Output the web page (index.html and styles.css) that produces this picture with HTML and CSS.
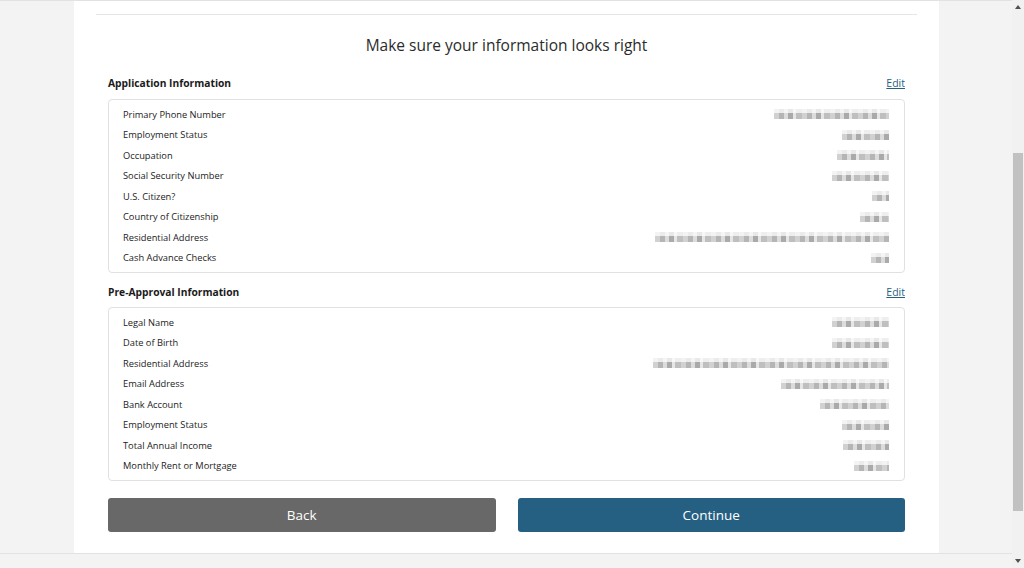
FILE: index.html
```html
<!DOCTYPE html>
<html>
<head>
<meta charset="utf-8">
<link rel="stylesheet" href="styles.css">
</head>
<body>
<div class="main">
  <div class="content">
    <div class="card">
      <div class="rule"></div>
      <div class="inner">
        <h1 class="title">Make sure your information looks right</h1>

        <div class="section-head">
          <span class="section-title">Application Information</span>
          <a class="edit" href="#">Edit</a>
        </div>
        <div class="box">
          <div class="row"><span class="label">Primary Phone Number</span><span class="val" style="width:115px"></span></div>
          <div class="row"><span class="label">Employment Status</span><span class="val" style="width:47px"></span></div>
          <div class="row"><span class="label">Occupation</span><span class="val" style="width:52px"></span></div>
          <div class="row"><span class="label">Social Security Number</span><span class="val" style="width:57px"></span></div>
          <div class="row"><span class="label">U.S. Citizen?</span><span class="val" style="width:17px"></span></div>
          <div class="row"><span class="label">Country of Citizenship</span><span class="val" style="width:29px"></span></div>
          <div class="row"><span class="label">Residential Address</span><span class="val" style="width:234px"></span></div>
          <div class="row"><span class="label">Cash Advance Checks</span><span class="val" style="width:18px"></span></div>
        </div>

        <div class="section-head second">
          <span class="section-title">Pre-Approval Information</span>
          <a class="edit" href="#">Edit</a>
        </div>
        <div class="box box2">
          <div class="row"><span class="label">Legal Name</span><span class="val" style="width:57px"></span></div>
          <div class="row"><span class="label">Date of Birth</span><span class="val" style="width:57px"></span></div>
          <div class="row"><span class="label">Residential Address</span><span class="val" style="width:236px"></span></div>
          <div class="row"><span class="label">Email Address</span><span class="val" style="width:108px"></span></div>
          <div class="row"><span class="label">Bank Account</span><span class="val" style="width:69px"></span></div>
          <div class="row"><span class="label">Employment Status</span><span class="val" style="width:47px"></span></div>
          <div class="row"><span class="label">Total Annual Income</span><span class="val" style="width:46px"></span></div>
          <div class="row"><span class="label">Monthly Rent or Mortgage</span><span class="val" style="width:35px"></span></div>
        </div>

        <div class="actions">
          <button class="btn back">Back</button>
          <button class="btn continue">Continue</button>
        </div>
      </div>
    </div>
  </div>
  <div class="bottom-strip"></div>
</div>
<div class="scrollbar">
  <div class="arrow up"></div>
  <div class="track"><div class="thumb"></div></div>
  <div class="arrow down"></div>
</div>
</body>
</html>
```
FILE: styles.css
```css
html, body {
  margin: 0;
  padding: 0;
}
body {
  width: 1024px;
  height: 568px;
  overflow: hidden;
  display: flex;
  background: #f3f3f3;
  font-family: "Open Sans", "Noto Sans", sans-serif;
  color: #222;
}
.main {
  flex: 1;
  display: flex;
  flex-direction: column;
  border-top: 1px solid #e2e2e2;
}
.content {
  flex: 1;
  display: flex;
  padding-left: 74px;
}
.card {
  width: 865px;
  background: #fff;
  padding: 0 22px;
  box-sizing: border-box;
}
.rule {
  height: 1px;
  background: #e6e6e6;
  margin-top: 13px;
}
.inner {
  padding: 0 12px;
}
.title {
  margin: 18px 0 0;
  font-size: 15.5px;
  font-weight: 400;
  line-height: 24px;
  text-align: center;
  color: #2b2b2b;
}
.section-head {
  display: flex;
  justify-content: space-between;
  align-items: center;
  margin-top: 19px;
  line-height: 15px;
}
.section-head.second {
  margin-top: 12px;
}
.section-title {
  font-size: 10.25px;
  font-weight: 700;
  color: #1a1a1a;
}
.edit {
  font-size: 10.5px;
  color: #255f82;
  text-decoration: underline;
}
.box {
  margin-top: 8px;
  border: 1px solid #e1e1e1;
  border-radius: 4px;
  padding: 4px 14px 4px 14px;
}
.box2 {
  margin-top: 7px;
}
.row {
  display: flex;
  justify-content: space-between;
  align-items: center;
  height: 20.5px;
}
.label {
  font-size: 9.3px;
  color: #222;
}
.val {
  height: 10px;
  margin-right: 1px;
  background: repeating-linear-gradient(90deg, #c9c9c9 0 5px, #a9a9a9 5px 10px, #d7d7d7 10px 14px, #9c9c9c 14px 19px, #e2e2e2 19px 22px, #b4b4b4 22px 28px);
  opacity: 0.85;
  filter: blur(0.5px);
  -webkit-mask: linear-gradient(#0004 0 45%, #000 45% 100%);
  mask: linear-gradient(#0004 0 45%, #000 45% 100%);
}
.actions {
  display: flex;
  gap: 22px;
  margin-top: 17px;
}
.btn {
  flex: 1;
  height: 34px;
  border: 0;
  border-radius: 3px;
  color: #fff;
  font-family: "Open Sans", "Noto Sans", sans-serif;
  font-size: 13.5px;
}
.back {
  background: #686868;
}
.continue {
  background: #256083;
}
.bottom-strip {
  height: 14px;
  border-top: 1px solid #e2e2e2;
}
.scrollbar {
  width: 12px;
  display: flex;
  flex-direction: column;
  background: #f1f1f1;
}
.arrow {
  height: 14px;
  display: flex;
  justify-content: center;
  align-items: center;
}
.arrow::before {
  content: "";
  border-left: 3.5px solid transparent;
  border-right: 3.5px solid transparent;
}
.arrow.up::before {
  border-bottom: 4px solid #505050;
}
.arrow.down::before {
  border-top: 4px solid #505050;
}
.track {
  flex: 1;
  padding-top: 139px;
  padding-left: 1px;
  padding-right: 1px;
}
.thumb {
  height: 358px;
  background: #c1c1c1;
}
```
